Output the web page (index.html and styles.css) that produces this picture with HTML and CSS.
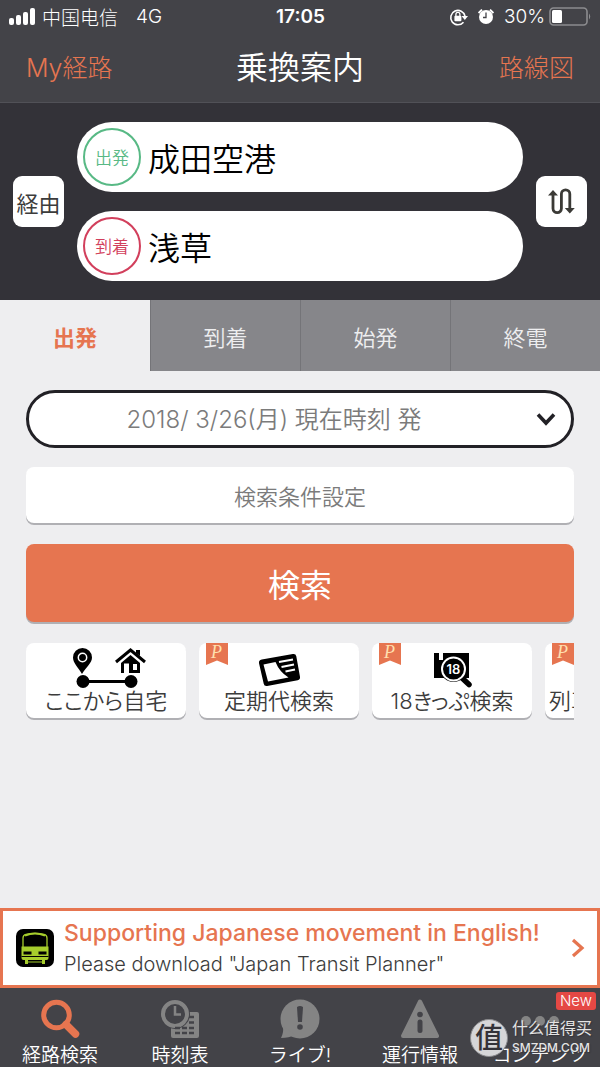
FILE: index.html
```html
<!DOCTYPE html>
<html lang="ja">
<head>
<meta charset="utf-8">
<meta name="viewport" content="width=device-width, initial-scale=1">
<title>乗換案内</title>
<link rel="stylesheet" href="styles.css">
</head>
<body>
<div class="app">
  <header class="top">
    <div class="status">
      <div class="status-left">
        <svg class="signal" viewBox="0 0 27 17" aria-hidden="true"><rect x="0" y="10" width="5" height="7" rx="2"/><rect x="7" y="7" width="5" height="10" rx="2"/><rect x="14" y="4" width="5" height="13" rx="2"/><rect x="21" y="0" width="5" height="17" rx="2"/></svg>
        <span class="carrier" lang="zh-CN">中国电信</span>
        <span>4G</span>
      </div>
      <strong class="clock">17:05</strong>
      <div class="status-right">
        <svg class="status-icon" viewBox="0 0 20 18" aria-hidden="true"><path d="M14.5 14.2A7.2 7.2 0 1 1 16 8.2" fill="none" stroke="#fff" stroke-width="1.6"/><path d="M12.6 8h6.4l-3.2 4z" fill="#fff"/><rect x="5.4" y="7.8" width="7" height="5.4" rx="1" fill="#fff"/><path d="M6.9 8V6.4a2 2 0 0 1 4 0V8" fill="none" stroke="#fff" stroke-width="1.3"/></svg>
        <svg class="alarm" viewBox="0 0 16 18" aria-hidden="true"><circle cx="8" cy="9" r="7" fill="#fff"/><path d="M.6 5 4 1.6M15.400 5 12 1.600" stroke="#fff" stroke-width="2"/><path d="M8 4.500v5H5" fill="none" stroke="#434348" stroke-width="1.300"/></svg>
        <span>30%</span>
        <svg class="battery" viewBox="0 0 43 19" aria-hidden="true"><rect x="1" y="1" width="37" height="17" rx="3.5" fill="none" stroke="#8c8c8f" stroke-width="1.6"/><rect x="3" y="3" width="10" height="13" rx="1.5" fill="#fff"/><path d="M40 6.500q2.500 3 0 6z" fill="#8c8c8f"/></svg>
      </div>
    </div>
    <div class="titlebar">
      <a class="bar-link" href="#my">My経路</a>
      <h1 class="title">乗換案内</h1>
      <a class="bar-link bar-link-end" href="#map">路線図</a>
    </div>
  </header>

  <section class="route">
    <button class="square" type="button">経由</button>
    <div class="stations">
      <div class="station">
        <label class="mark mark-from" for="from">出発</label>
        <input class="station-input" id="from" type="text" value="成田空港">
      </div>
      <div class="station">
        <label class="mark mark-to" for="to">到着</label>
        <input class="station-input" id="to" type="text" value="浅草">
      </div>
    </div>
    <button class="square" type="button" aria-label="入れ替え">
      <svg class="swap" viewBox="0 0 27 27" aria-hidden="true"><path d="M5 5v15.500a4.200 4.200 0 0 0 8.400 0V6a4.200 4.200 0 0 1 8.400 0v15" fill="none" stroke="#3b3a36" stroke-width="2.800"/><path d="M0 7.500 5 2l5 5.500zM16.800 20h10L21.800 25.500z" fill="#3b3a36"/></svg>
    </button>
  </section>

  <nav class="tabs">
    <button class="tab tab-on" type="button">出発</button>
    <button class="tab" type="button">到着</button>
    <button class="tab" type="button">始発</button>
    <button class="tab" type="button">終電</button>
  </nav>

  <main class="main">
    <div class="when">
      <select class="when-select" aria-label="日時"><option>2018/ 3/26(月) 現在時刻 発</option></select>
      <svg class="chevron" viewBox="0 0 20 14" aria-hidden="true"><path d="M2 2.500 10 11l8-8.500" fill="none" stroke="#222126" stroke-width="3.600"/></svg>
    </div>
    <button class="options" type="button">検索条件設定</button>
    <button class="search" type="button">検索</button>
    <div class="cards">
      <button class="card" type="button">
        <svg class="card-icon card-icon-home" viewBox="-2 0 76 40" aria-hidden="true"><path d="M12 26C8 19 3 15 3 9.500a9.300 9.300 0 0 1 19 0C22 15 16 19 12 26z"/><circle cx="12.500" cy="9.500" r="4.200" fill="none" stroke="#fff" stroke-width="1.500"/><circle cx="13" cy="33.500" r="6.500"/><circle cx="61" cy="33.500" r="6.500"/><path d="M13 33.500h48" stroke="#000" stroke-width="3"/><path d="M46 14 60.500 2 75 14" fill="none" stroke="#000" stroke-width="3"/><path d="M66 2h4v6l-4-3z"/><path d="M51 15 60.500 7 70 15V25H51z"/><path d="M54 15.500h5V25h-5zM63 16h4v6h-4z" fill="#fff"/></svg>
        <span>ここから自宅</span>
      </button>
      <button class="card" type="button">
        <svg class="ribbon" viewBox="0 0 22 22" aria-hidden="true"><path d="M0 0h22v22l-11-4.500L0 22z" fill="#e67550"/></svg><span class="ribbon-letter">P</span>
        <svg class="card-icon" viewBox="0 0 44 36" aria-hidden="true"><path d="M5 8.500 36 3q2-.3 2.300 1.500L42 25q.3 2-1.500 2.300L10 33q-2 .3-2.300-1.500L3 11q-.3-2 2-2.500z" stroke="#000" stroke-width="2"/><path d="M6.500 12.500 18.500 10q4 10 13 15.500l-20.500 4z" fill="#fff"/><path d="M22 10l14-2.500M24.500 15 37 12.500M28.500 19.500l9.500-2" stroke="#fff" stroke-width="2"/></svg>
        <span>定期代検索</span>
      </button>
      <button class="card" type="button">
        <svg class="ribbon" viewBox="0 0 22 22" aria-hidden="true"><path d="M0 0h22v22l-11-4.500L0 22z" fill="#e67550"/></svg><span class="ribbon-letter">P</span>
        <svg class="card-icon" viewBox="0 0 44 36" aria-hidden="true"><path d="M4 1h5v7h4V1h26v25H4z"/><path d="m31 25 8 7.500" stroke="#000" stroke-width="5.500" stroke-linecap="round"/><circle cx="23.500" cy="17" r="13" fill="#000"/><circle cx="23.500" cy="17" r="11.500" fill="none" stroke="#fff" stroke-width="2"/><text class="ticket-num" x="23.500" y="22" text-anchor="middle">18</text></svg>
        <span>18きっぷ検索</span>
      </button>
      <button class="card" type="button">
        <svg class="ribbon" viewBox="0 0 22 22" aria-hidden="true"><path d="M0 0h22v22l-11-4.500L0 22z" fill="#e67550"/></svg><span class="ribbon-letter">P</span>
        <span class="card-cut">列車</span>
      </button>
    </div>
  </main>

  <a class="promo" href="#english">
    <svg class="promo-icon" viewBox="0 0 38 38" aria-hidden="true"><rect width="38" height="38" rx="7"/><path d="M7 20V9q0-3 3-3.600 9-2 18 0 3 .6 3 3.600v11" fill="none" stroke="#a6cd2c" stroke-width="1.300"/><path d="M9 6.500q10-4 20 0" fill="none" stroke="#a6cd2c" stroke-width="2"/><path d="M5.500 17.500h27V29q0 2-2 2h-23q-2 0-2-2z" fill="#a6cd2c"/><path d="M7.500 22.500h8v3h-8zM22.500 22.500h8v3h-8z"/><path d="M5.500 27.500h27" stroke="#000" stroke-width="1"/><path d="M9 31h3v4H9zM26 31h3v4h-3zM9 32.500h20v1H9z" fill="#a6cd2c"/></svg>
    <span class="promo-text">
      <strong class="promo-title">Supporting Japanese movement in English!</strong>
      <span class="promo-sub">Please download "Japan Transit Planner"</span>
    </span>
    <svg class="promo-arrow" viewBox="0 0 14 20" aria-hidden="true"><path d="M2 2l9 8-9 8" fill="none" stroke="#e67550" stroke-width="3.200"/></svg>
  </a>

  <nav class="bottom">
    <a class="item" href="#search">
      <svg class="item-icon" viewBox="0 0 40 40" aria-hidden="true"><circle cx="16.500" cy="16" r="12.800" fill="none" stroke="#e67550" stroke-width="5"/><path d="m26 25.500 9.500 9.500" stroke="#e67550" stroke-width="7.500" stroke-linecap="round"/></svg>
      <span>経路検索</span>
    </a>
    <a class="item" href="#timetable">
      <svg class="item-icon" viewBox="0 0 40 40" aria-hidden="true"><rect x="11" y="13" width="28" height="26" rx="2" fill="#848484"/><circle cx="15" cy="15" r="15" fill="#434348"/><circle cx="15" cy="15" r="12" fill="#434348" stroke="#848484" stroke-width="4"/><path d="M15 7v8.500h6" fill="none" stroke="#848484" stroke-width="2.500"/><path d="M29 18h5M22 28.500h0M29 23.500h5M15 29h5M22 29h5M29 29h5M15 34h5M22 34h5M29 34h5" stroke="#434348" stroke-width="2.400"/></svg>
      <span>時刻表</span>
    </a>
    <a class="item" href="#live">
      <svg class="item-icon" viewBox="0 0 40 40" aria-hidden="true"><circle cx="20" cy="20" r="19.500" fill="#848484"/><path d="M3 27q1 6-2 12 8 0 14-3z" fill="#848484"/><path d="M17 8q3-2 6 0l-1 15h-4z" fill="#434348"/><circle cx="20" cy="28" r="2.800" fill="#434348"/></svg>
      <span>ライブ!</span>
    </a>
    <a class="item" href="#info">
      <svg class="item-icon" viewBox="0 0 40 40" aria-hidden="true"><path d="M20 2.500 37 37H3z" fill="#848484" stroke="#848484" stroke-width="4" stroke-linejoin="round"/><circle cx="20" cy="15.500" r="2.800" fill="#434348"/><path d="M20 23v8.500" stroke="#434348" stroke-width="5" stroke-linecap="round"/></svg>
      <span>運行情報</span>
    </a>
    <a class="item" href="#contents">
      <svg class="item-icon" viewBox="0 0 40 40" aria-hidden="true"><circle cx="6" cy="22" r="5" fill="#848484"/><circle cx="20" cy="22" r="5" fill="#848484"/><circle cx="34" cy="22" r="5" fill="#848484"/></svg>
      <span>コンテンツ</span>
      <span class="badge">New</span>
    </a>
    <div class="watermark" lang="zh-CN">
      <span class="seal">值</span>
      <span class="watermark-text"><span>什么值得买</span><span class="watermark-site">SMZDM.COM</span></span>
    </div>
  </nav>
</div>
</body>
</html>
```

FILE: styles.css
```css
* { box-sizing: border-box; }
body {
  margin: 0;
  background: #eeeef0;
  color: #3c3c3c;
  font-family: "Inter", "Noto Sans CJK JP", sans-serif;
}
button, input, select {
  margin: 0;
  padding: 0;
  border: 0;
  font: inherit;
  color: inherit;
}
a { text-decoration: none; color: inherit; }
svg { display: block; flex: none; }
:lang(zh-CN) { font-family: "Inter", "Noto Sans CJK SC", sans-serif; }

.app { display: flex; flex-direction: column; min-height: 100vh; }

.top {
  background: #434348;
  color: #fff;
  border-bottom: 1px solid #515157;
}
.status {
  display: grid;
  grid-template-columns: 1fr auto 1fr;
  align-items: center;
  height: 33px;
  padding: 0 8px 0 9px;
  font-size: 19px;
  font-weight: 300;
}
.status-left, .status-right { display: flex; align-items: center; }
.status-left { gap: 6px; }
.status-right { justify-content: flex-end; gap: 4px; }
.carrier { margin-right: 12px; }
.signal { width: 27px; height: 17px; fill: #fff; }
.clock { font-weight: 600; }
.status-icon { width: 20px; height: 18px; margin-right: 5px; }
.alarm { width: 16px; height: 18px; margin-right: 6px; }
.battery { width: 43px; height: 19px; }

.titlebar {
  display: grid;
  grid-template-columns: 1fr auto 1fr;
  align-items: center;
  height: 69px;
  padding: 0 26px;
}
.bar-link { color: #e67550; font-size: 25px; font-weight: 300; line-height: 30px; }
.bar-link-end { text-align: right; }
.title { margin: 0; font-size: 32px; font-weight: 350; line-height: 40px; }

.square, .mark, .station-input, .tab, .options, .search {
  font-family: "Noto Sans CJK JP", sans-serif;
}

.route {
  display: grid;
  grid-template-columns: 51px minmax(0, 1fr) 51px;
  gap: 13px;
  align-items: center;
  padding: 19px 13px;
  background: #333238;
}
.square {
  display: grid;
  place-items: center;
  height: 51px;
  border-radius: 9px;
  background: #fff;
  font-size: 22px;
  line-height: 32px;
}
.swap { width: 27px; height: 27px; }
.stations { display: grid; gap: 19px; }
.station {
  display: flex;
  align-items: center;
  gap: 7px;
  height: 70px;
  padding: 0 36px 0 6px;
  border-radius: 35px;
  background: #fff;
}
.mark {
  display: grid;
  place-items: center;
  flex: none;
  width: 58px;
  height: 58px;
  border: 2px solid;
  border-radius: 50%;
  font-size: 17px;
  font-weight: 350;
  line-height: 24px;
}
.mark-from { color: #58b985; }
.mark-to { color: #d23f5c; }
.station-input {
  flex: 1;
  width: 100%;
  min-width: 0;
  height: 48px;
  background: transparent;
  color: #000;
  font-size: 32px;
  font-weight: 350;
}

.tabs { display: grid; grid-template-columns: repeat(4, 1fr); }
.tab {
  height: 71px;
  border-left: 1px solid #747478;
  background: #86868a;
  color: #eeeef0;
  font-size: 22px;
  font-weight: 350;
}
.tab-on {
  border-left: 0;
  background: #eeeef0;
  color: #e67550;
  font-weight: 700;
}

.main {
  flex: 1;
  display: flex;
  flex-direction: column;
  gap: 19px;
  padding: 19px 26px;
}
.when { display: grid; align-items: center; }
.when-select, .chevron { grid-area: 1 / 1; }
.when-select {
  appearance: none;
  width: 100%;
  height: 58px;
  padding: 0 52px 0 0;
  border: 3px solid #222126;
  border-radius: 29px;
  background: #fff;
  color: #7b7b7b;
  font-size: 24px;
  font-weight: 350;
  text-align: center;
  text-align-last: center;
}
.chevron {
  justify-self: end;
  width: 20px;
  height: 14px;
  margin-right: 18px;
  pointer-events: none;
}
.options, .search, .card { border-radius: 8px; box-shadow: 0 2px 0 #b0b0b4; }
.options {
  height: 56px;
  margin-bottom: 2px;
  background: #fff;
  color: #7b7b7b;
  font-size: 22px;
  font-weight: 350;
}
.search {
  height: 78px;
  margin-bottom: 2px;
  background: #e67550;
  color: #fff;
  font-size: 32px;
}
.cards {
  display: flex;
  gap: 13px;
  padding-bottom: 3px;
  overflow: hidden;
}
.card {
  position: relative;
  display: flex;
  flex-direction: column;
  align-items: center;
  justify-content: flex-end;
  flex: none;
  width: 160px;
  height: 75px;
  padding-bottom: 4px;
  background: #fff;
  font-size: 22px;
  font-weight: 350;
  font-feature-settings: "palt";
  line-height: 26px;
}
.card-icon { width: 44px; height: 36px; overflow: visible; }
.card-icon-home { width: 76px; height: 40px; }
.card-cut { align-self: flex-start; padding-left: 4px; }
.ribbon { position: absolute; top: 0; left: 7px; width: 22px; height: 22px; }
.ribbon-letter {
  position: absolute;
  top: 0;
  left: 12px;
  color: #ffdfae;
  font: italic 18px/18px "Liberation Serif", serif;
}
.ticket-num { fill: #fff; font-size: 13px; font-weight: 600; }

.promo {
  display: flex;
  align-items: center;
  gap: 10px;
  height: 80px;
  padding: 0 12px 0 13px;
  border: 3px solid #e67550;
  background: #fff;
}
.promo-icon { width: 38px; height: 38px; }
.promo-text { display: flex; flex: 1; flex-direction: column; white-space: nowrap; }
.promo-title { color: #e67550; font-size: 23px; font-weight: 500; line-height: 32px; }
.promo-sub { font-size: 20px; font-weight: 350; line-height: 30px; }
.promo-arrow { width: 14px; height: 20px; }

.bottom {
  position: relative;
  display: grid;
  grid-template-columns: repeat(5, 1fr);
  background: #434348;
  color: #fff;
}
.item {
  position: relative;
  display: flex;
  flex-direction: column;
  align-items: center;
  height: 79px;
  padding-top: 11px;
  font-size: 19px;
  font-weight: 350;
  line-height: 34px;
  white-space: nowrap;
}
.item-icon { width: 40px; height: 40px; }
.badge {
  position: absolute;
  top: 4px;
  right: 4px;
  padding: 0 4px;
  border-radius: 3px;
  background: #e54844;
  font-size: 15px;
  line-height: 18px;
}
.watermark {
  position: absolute;
  right: 8px;
  bottom: 9px;
  display: flex;
  align-items: center;
  gap: 4px;
  color: #e4e4e4;
  font-size: 16px;
  line-height: 20px;
  text-shadow: 1px 1px 1px #333238;
}
.seal {
  display: grid;
  place-items: center;
  width: 38px;
  height: 38px;
  border: 1px solid #8a8a8d;
  border-radius: 50%;
  background: #d6d6d8;
  color: #333238;
  font-size: 28px;
  font-weight: 500;
  text-shadow: none;
}
.watermark-text { display: flex; flex-direction: column; }
.watermark-site { font-size: 12px; font-weight: 500; }
```
